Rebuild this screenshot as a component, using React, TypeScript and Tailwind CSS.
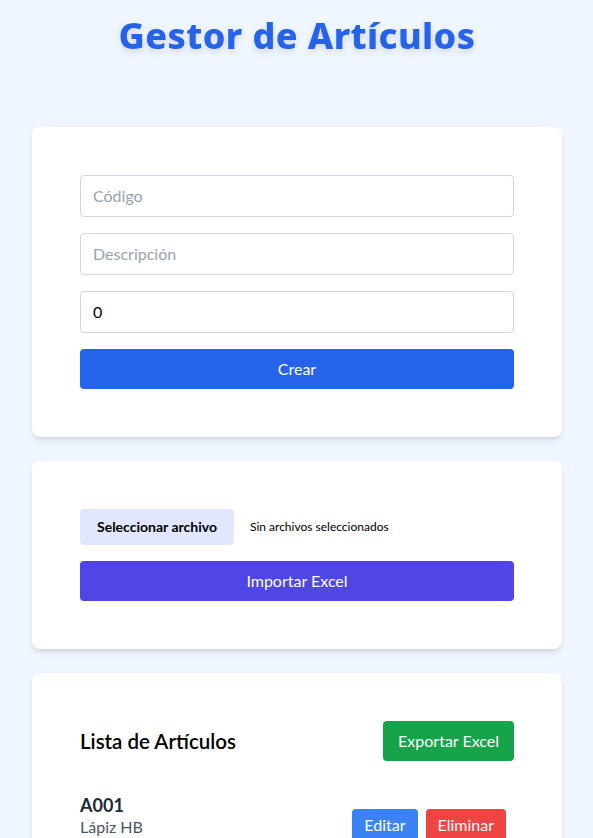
import React from "react";

export default function App() {
  const font = { fontFamily: 'Lato, "Noto Sans", sans-serif' };
  return (
    <div className="min-h-screen bg-[#eff6ff] pl-8 pr-[31px] pt-4 pb-8" style={font}>
      <h1
        className="text-4xl leading-10 font-extrabold text-[#2563eb] text-center mb-[71px] drop-shadow-md"
        style={{ fontFamily: '"Noto Sans", sans-serif', letterSpacing: "0.4px" }}
      >
        Gestor de Artículos
      </h1>

      <div className="bg-white rounded-lg shadow-md p-12 mb-6 flex flex-col gap-4">
        <input
          className="w-full border border-gray-300 rounded px-3 py-2 text-base leading-6 placeholder-gray-400 text-black outline-none"
          placeholder="Código"
        />
        <input
          className="w-full border border-gray-300 rounded px-3 py-2 text-base leading-6 placeholder-gray-400 text-black outline-none"
          placeholder="Descripción"
        />
        <input
          className="w-full border border-gray-300 rounded px-3 py-2 text-base leading-6 text-black outline-none"
          defaultValue="0"
        />
        <button className="w-full bg-[#2563eb] text-white rounded h-10 text-base">Crear</button>
      </div>

      <div className="bg-white rounded-lg shadow-md p-12 mb-6 flex flex-col gap-4">
        <div className="flex items-center">
          <span className="bg-[#e0e7ff] rounded px-[17px] h-9 flex items-center text-sm font-bold text-black mr-4">
            Seleccionar archivo
          </span>
          <span className="text-[12px] text-black">Sin archivos seleccionados</span>
        </div>
        <button className="w-full bg-[#4f46e5] text-white rounded h-10 text-base">Importar Excel</button>
      </div>

      <div className="bg-white rounded-lg shadow-md p-12">
        <div className="flex justify-between items-center">
          <h2 className="text-[20.5px] font-semibold text-black">Lista de Artículos</h2>
          <button className="bg-[#16a34a] text-white rounded px-[15px] h-10 text-base">Exportar Excel</button>
        </div>
        <ul className="mt-8">
          <li className="flex justify-between items-start pr-2">
            <div>
              <p className="text-lg leading-6 font-bold text-gray-800">A001</p>
              <p className="text-base leading-5 text-gray-600">Lápiz HB</p>
            </div>
            <div className="flex gap-2 mt-4">
              <button className="bg-[#3b82f6] text-white rounded px-3 py-1 text-base">Editar</button>
              <button className="bg-[#ef4444] text-white rounded px-3 py-1 text-base">Eliminar</button>
            </div>
          </li>
        </ul>
      </div>
    </div>
  );
}
